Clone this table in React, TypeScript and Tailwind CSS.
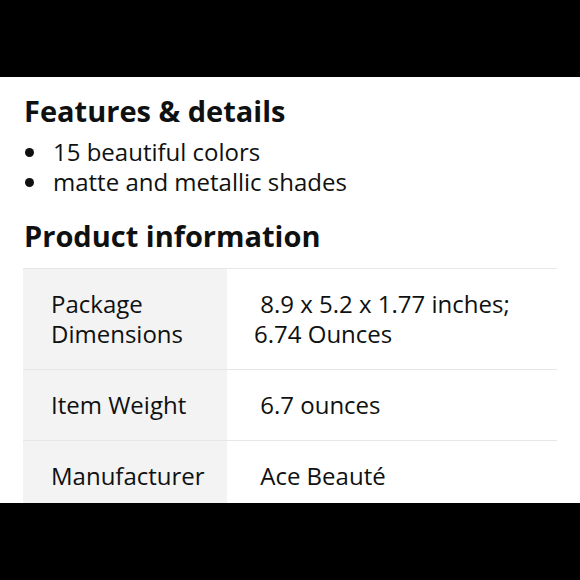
const FEATURES = ['15 beautiful colors', 'matte and metallic shades'];

const INFO = [
  { label: ['Package', 'Dimensions'], value: ['\u00a08.9 x 5.2 x 1.77 inches;', '6.74 Ounces'] },
  { label: ['Item Weight'], value: ['\u00a06.7 ounces'] },
  { label: ['Manufacturer'], value: ['\u00a0Ace Beauté'] },
];

export default function App() {
  return (
    <div
      className="w-[580px] h-[580px] bg-black flex flex-col overflow-hidden text-[#0f1111]"
      style={{ fontFamily: '"Open Sans", "Noto Sans", sans-serif' }}
    >
      <div className="h-[77px] shrink-0" />
      <div className="h-[426px] shrink-0 bg-white pl-[24px] pt-[16px] overflow-hidden">
        <h2 className="text-[29px] leading-[36px] font-bold">Features &amp; details</h2>
        <ul className="mt-[8px]">
          {FEATURES.map((f) => (
            <li key={f} className="flex items-center text-[24px] leading-[30px]">
              <span className="w-[9px] h-[9px] rounded-full bg-[#0f1111] ml-[1px] mr-[19px]" />
              {f}
            </li>
          ))}
        </ul>
        <h2 className="mt-[21px] text-[29px] leading-[36px] font-bold">Product information</h2>

        <div className="mt-[14px] w-[534px] -ml-[1px] border-t border-[#e7e7e7]">
          {INFO.map((row) => (
            <div key={row.label[0]} className="flex border-b border-[#e7e7e7] text-[24px] leading-[30px]">
              <div className="w-[204px] shrink-0 bg-[#f3f3f3] pl-[28px] py-[20px]">
                {row.label.map((l) => (
                  <div key={l}>{l}</div>
                ))}
              </div>
              <div className="flex-1 pl-[27px] py-[20px]">
                {row.value.map((v) => (
                  <div key={v} className="whitespace-pre">{v}</div>
                ))}
              </div>
            </div>
          ))}
        </div>
      </div>
    </div>
  );
}
